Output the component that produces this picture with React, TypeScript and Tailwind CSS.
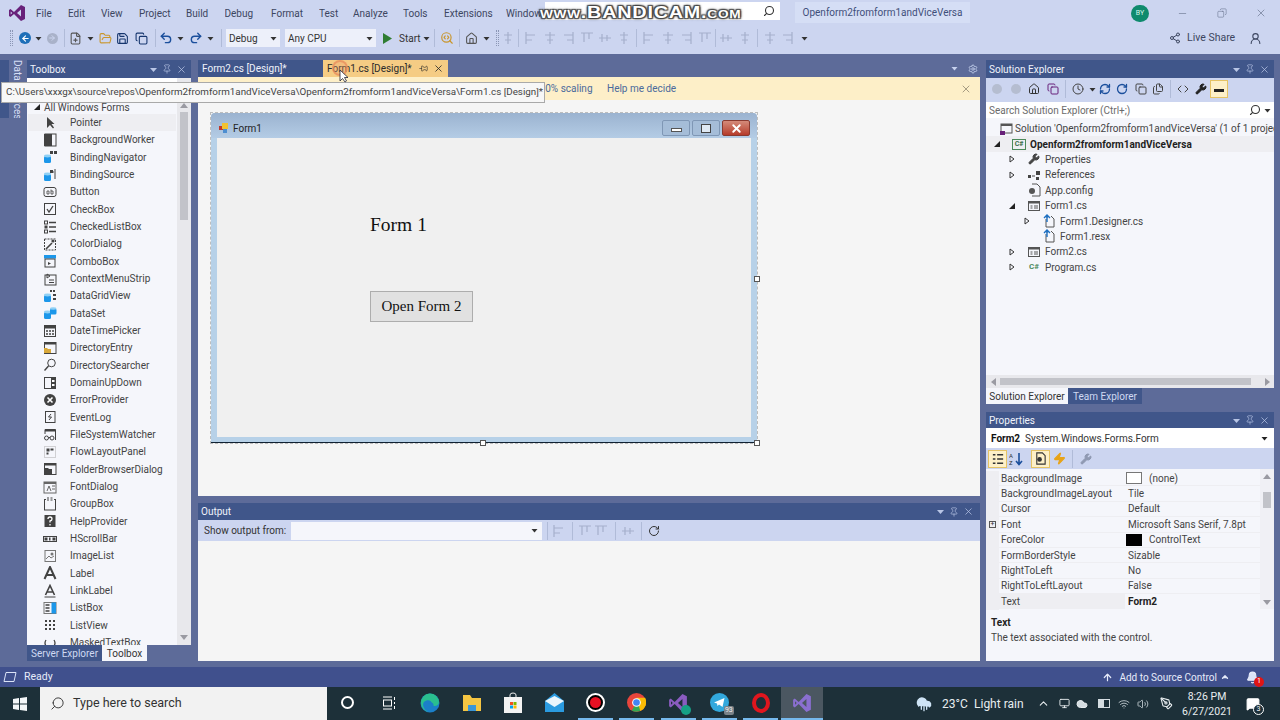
import type { ReactNode } from 'react'
import {
  ChevronUp, Home, RefreshCw, RotateCw, Clock, Copy, Files, Code, Wrench, Search, X, Pin, Settings,
  Undo2, Redo2, Save, FolderOpen, FilePlus, ArrowUp, Bell, Zap, Volume2, Wifi, Cloud, CloudRain, Monitor, PenTool,
  MessageSquare, Share2, UserRound, ArrowLeft, ArrowRight, SearchCode, Minus,
} from 'lucide-react'

function Gl({ children, s = 14 }: { children: ReactNode; s?: number }) {
  return <svg width={s} height={s} viewBox="0 0 14 14" className="shrink-0">{children}</svg>
}

const ink = '#424242'
const cyl = (
  <g>
    <rect x="1" y="6" width="7" height="7" rx="1.5" fill="#1c97ea" />
    <ellipse cx="4.5" cy="6" rx="3.5" ry="1.4" fill="#8fd0f5" />
  </g>
)

const toolIcons: Record<string, ReactNode> = {
  Pointer: <path d="M4 1 L4 12 L7 9 L10 12.5 L11 11.5 L8.5 8 L11.5 8 Z" fill={ink} />,
  BackgroundWorker: <g><rect x="2" y="1" width="11" height="12" fill="none" stroke={ink} /><rect x="1" y="1" width="8" height="7" fill={ink} /><rect x="1" y="6" width="8" height="7" fill={ink} /></g>,
  BindingNavigator: <g>{cyl}<rect x="7" y="1" width="3" height="3" fill={ink} /><rect x="11" y="1" width="3" height="3" fill={ink} /></g>,
  BindingSource: <g>{cyl}<path d="M8 4 h3 M12 1 v10" stroke={ink} fill="none" /><rect x="7" y="2" width="3" height="3" fill={ink} /></g>,
  Button: <g><rect x="1" y="2.5" width="12" height="9" rx="2" fill="none" stroke={ink} /><path d="M4 6 h2 v3 h-2 z M8 4.5 v4.5 h2 v-3 h-2" fill="none" stroke={ink} strokeWidth=".8" /></g>,
  CheckBox: <g><rect x="1.5" y="1.5" width="11" height="11" fill="none" stroke={ink} /><path d="M4 7 L6 10 L10 4" fill="none" stroke={ink} strokeWidth="1.3" /></g>,
  CheckedListBox: <g><rect x="1.5" y="1" width="3" height="3" fill="none" stroke={ink} /><rect x="1.5" y="5.5" width="3" height="3" fill={ink} /><rect x="1.5" y="10" width="3" height="3" fill="none" stroke={ink} /><path d="M6 2.5 h7 M6 7 h7 M6 11.5 h7" stroke={ink} strokeWidth="1.3" /></g>,
  ColorDialog: <g><rect x="1.5" y="2" width="11" height="11" fill="none" stroke={ink} strokeDasharray="2 1" /><path d="M3 12 L9 6" stroke={ink} strokeWidth="1.6" /><circle cx="10" cy="4" r="1.6" fill={ink} /></g>,
  ComboBox: <g><rect x="1" y="1" width="12" height="3.5" fill="#1c97ea" /><rect x="2" y="5" width="10" height="8" fill="none" stroke={ink} /><path d="M5 8 l3 1.5 l-3 1.5" fill={ink} /></g>,
  ContextMenuStrip: <g><rect x="2" y="3" width="11" height="10" fill="none" stroke={ink} /><path d="M4 2 v4 l3 -2 z M6 8 h5 M6 10.5 h5" stroke={ink} fill="none" /></g>,
  DataGridView: <g>{cyl}<path d="M7 1 h2 v2 h-2 z M10 1 h2 v2 h-2 z M10 5 h3 v2 h-3 z M10 9 h3 v2 h-3 z" fill={ink} /></g>,
  DataSet: <g>{cyl}<rect x="7" y="2.5" width="6.5" height="6" rx="1.5" fill="#1c97ea" /><ellipse cx="10.2" cy="2.5" rx="3.2" ry="1.2" fill="#8fd0f5" /></g>,
  DateTimePicker: <g><rect x="1.5" y="1.5" width="11" height="11" fill="none" stroke={ink} /><rect x="1.5" y="1.5" width="11" height="3" fill={ink} /><path d="M3 7 h2 M6 7 h2 M9 7 h2 M3 10 h2 M6 10 h2 M9 10 h2" stroke={ink} strokeWidth="1.4" /></g>,
  DirectoryEntry: <g><rect x="1.5" y="1.5" width="11.5" height="11" fill="none" stroke={ink} /><rect x="1.5" y="1.5" width="11.5" height="2" fill={ink} /><path d="M1 7 h3 l1 1 h3 v4 h-7 z" fill="#d8a83a" /></g>,
  DirectorySearcher: <g><circle cx="8.5" cy="5" r="3.8" fill="none" stroke={ink} /><path d="M5.5 8 L1.5 12.5" stroke={ink} strokeWidth="1.4" /></g>,
  DomainUpDown: <g><rect x="1.5" y="1.5" width="11" height="11" fill="none" stroke={ink} /><rect x="8" y="1.5" width="4.5" height="11" fill={ink} /><rect x="9" y="4" width="2.5" height="2" fill="#fff" /><rect x="9" y="8" width="2.5" height="2" fill="#fff" /></g>,
  ErrorProvider: <g><circle cx="7" cy="7" r="6" fill={ink} /><path d="M4.5 4.5 L9.5 9.5 M9.5 4.5 L4.5 9.5" stroke="#fff" strokeWidth="1.6" /></g>,
  EventLog: <g><rect x="2.5" y="1.5" width="9.5" height="11" fill="none" stroke={ink} /><path d="M8 4 L5.5 7 h3 L6 10" fill="none" stroke={ink} /></g>,
  FileSystemWatcher: <g><path d="M2 6 V1.5 H12.5 V12" fill="none" stroke={ink} /><rect x="2" y="1.5" width="10.5" height="2" fill={ink} /><circle cx="3.5" cy="10" r="2" fill="none" stroke={ink} /><circle cx="9" cy="10" r="2" fill="none" stroke={ink} /><path d="M5.5 9.5 h1.5" stroke={ink} /></g>,
  FlowLayoutPanel: <g><rect x="1.5" y="1.5" width="11" height="11" fill="none" stroke="#aaa" strokeDasharray="1 1" /><rect x="3.5" y="3.5" width="3" height="3" fill={ink} /><rect x="7.5" y="3.5" width="3" height="2" fill={ink} /><rect x="3.5" y="7.5" width="2" height="2" fill={ink} /></g>,
  FolderBrowserDialog: <g><rect x="1.5" y="1.5" width="11.5" height="11" fill="none" stroke={ink} /><rect x="1.5" y="1.5" width="11.5" height="2" fill={ink} /><path d="M1 6 h4 l1 1 h3 v6 h-8 z" fill={ink} /></g>,
  FontDialog: <g><rect x="1" y="2" width="12" height="11" fill="none" stroke="#666" /><rect x="1" y="2" width="12" height="2" fill="#666" /><path d="M4 11 L6 6 L8 11 M9 6 h3 M9 9 h3" fill="none" stroke="#666" /></g>,
  GroupBox: <g><rect x="1.5" y="2.5" width="11" height="10.5" fill="none" stroke={ink} /><rect x="3" y="0.5" width="8" height="3.5" fill="#f5f6fb" /><path d="M4 1 h2 M7.5 1 h2 M4 3 h2 M7.5 3 h2" stroke={ink} /></g>,
  HelpProvider: <g><rect x="1.5" y="1" width="11" height="12" fill={ink} /><path d="M5 5 Q5 3 7 3 Q9 3 9 5 Q9 6.5 7 7 V8.5 M7 10 V11.5" fill="none" stroke="#fff" strokeWidth="1.3" /></g>,
  HScrollBar: <g><rect x="0.5" y="4.5" width="13" height="5" fill="none" stroke={ink} /><rect x="1.5" y="5.5" width="3" height="3" fill={ink} /><rect x="6" y="5.5" width="1.5" height="3" fill={ink} /><rect x="9.5" y="5.5" width="3" height="3" fill={ink} /></g>,
  ImageList: <g><rect x="2" y="1.5" width="10.5" height="11" fill="none" stroke="#777" /><circle cx="9" cy="5" r="1.5" fill="#777" /><path d="M3 10 L6 7 L8 9 L11 7" fill="none" stroke="#777" /></g>,
  Label: <path d="M1.5 13 L7 1 L12.5 13 M4 9 h6" fill="none" stroke={ink} strokeWidth="2" />,
  LinkLabel: <g><path d="M2.5 11 L7 1.5 L11.5 11 M4.5 8 h5" fill="none" stroke={ink} strokeWidth="1.6" /><path d="M1.5 13 h11" stroke={ink} /></g>,
  ListBox: <g><rect x="1" y="1.5" width="12" height="11" fill="none" stroke="#777" /><rect x="8.5" y="1.5" width="4.5" height="11" fill="#1c97ea" /><path d="M2.5 4 h4 M2.5 7 h4 M2.5 10 h4" stroke={ink} strokeWidth="1.3" /></g>,
  ListView: <g>{[2, 6, 10].map((x) => [2, 6, 10].map((y) => <rect key={`${x}${y}`} x={x} y={y} width="2" height="2" fill={ink} />))}</g>,
  MaskedTextBox: <path d="M3 4 Q1 7 3 10 M11 4 Q13 7 11 10 M7 9 v1" fill="none" stroke={ink} strokeWidth="1.3" />,
}

const toolNames = Object.keys(toolIcons)

const menus: [string, string][] = [
  ['File', 'w-[32px]'], ['Edit', 'w-[33px]'], ['View', 'w-[38px]'], ['Project', 'w-[47px]'], ['Build', 'w-[38.5px]'], ['Debug', 'w-[46.5px]'],
  ['Format', 'w-[48px]'], ['Test', 'w-[34px]'], ['Analyze', 'w-[50px]'], ['Tools', 'w-[41px]'], ['Extensions', 'w-[62px]'], ['Window', 'w-[39px]'],
]

function Cell({ w, children }: { w: string; children?: ReactNode }) {
  return <div className={`flex shrink-0 items-center justify-center ${w}`}>{children}</div>
}

function PanelButtons({ tone = 'text-[#b9c6e6]' }: { tone?: string }) {
  return (
    <div className={`flex items-center gap-[4px] ${tone}`}>
      <svg width="9" height="9" viewBox="0 0 9 9"><path d="M1 3 h7 L4.5 7 z" fill="currentColor" /></svg>
      <Pin size={10} strokeWidth={1.6} />
      <X size={11} strokeWidth={1.6} />
    </div>
  )
}

function Caret({ className = 'text-[#333]' }: { className?: string }) {
  return (
    <svg width="7" height="5" viewBox="0 0 7 5" className={`shrink-0 ${className}`}><path d="M0.5 1 h6 L3.5 4.5 z" fill="currentColor" /></svg>
  )
}

function Grip() {
  return <div className="h-[16px] w-[3px] shrink-0 border-x border-dotted border-[#8b96b5]" />
}

function Sep({ c = 'bg-[#b0bbd8]' }: { c?: string }) {
  return <div className={`h-[18px] w-px shrink-0 ${c}`} />
}

function Combo({ label, w }: { label: string; w: string }) {
  return (
    <div className={`flex h-[18px] shrink-0 items-center justify-between bg-[#edf0fa] px-[3px] text-[#333] ${w}`}>
      <span>{label}</span>
      <Caret />
    </div>
  )
}

function DisabledGlyph({ kind }: { kind: number }) {
  const d = [
    'M7 1 v12 M3 4 h8 M4 9 h6',
    'M2 1 v12 M2 4 h9 M2 9 h6',
    'M7 1 v12 M2 4 h10 M4 9 h6',
    'M12 1 v12 M3 4 h9 M6 9 h6',
    'M1 2 h12 M4 2 v9 M9 2 v6',
    'M1 7 h12 M4 3 v8 M9 4 v6',
  ][kind % 6]
  return (
    <svg width="14" height="14" viewBox="0 0 14 14" className="shrink-0"><path d={d} fill="none" stroke="#a5b0cc" strokeWidth="1.2" /></svg>
  )
}

function VsLogo({ s = 18, c = '#68217a' }: { s?: number; c?: string }) {
  return (
    <svg width={s} height={s} viewBox="0 0 18 18" className="shrink-0">
      <path d="M13 1 L17 3 V15 L13 17 L6 10 L2.5 13 L1 12 V6 L2.5 5 L6 8 Z M13 5.5 L9 9 L13 12.5 Z M2.7 7.5 V10.5 L4.3 9 Z" fill={c} fillRule="evenodd" />
    </svg>
  )
}

function TreeRow({ depth, arrow, icon, children, selected }: { depth: number; arrow?: 'open' | 'closed'; icon: ReactNode; children: ReactNode; selected?: boolean }) {
  return (
    <div className={`flex h-[15.4px] items-center whitespace-nowrap ${selected ? 'bg-[#eeeef2] font-bold text-[#1e1e1e]' : ''}`}>
      <div className="flex w-[22px] shrink-0 items-center justify-end" style={{ paddingRight: 8, marginLeft: depth }}>
        {arrow === 'open' && <svg width="6" height="6" viewBox="0 0 6 6"><path d="M6 0 V6 H0 Z" fill="#222" /></svg>}
        {arrow === 'closed' && <svg width="6" height="8" viewBox="0 0 6 8"><path d="M1 1 L5 4 L1 7 Z" fill="none" stroke="#333" /></svg>}
      </div>
      <div className="ml-[4px] mr-[4px] flex w-[14px] shrink-0 justify-center">{icon}</div>
      <span>{children}</span>
    </div>
  )
}

const formIcon = <Gl><rect x="1.5" y="2.5" width="11" height="9" fill="none" stroke="#555" /><rect x="1.5" y="2.5" width="11" height="2" fill="#555" /><path d="M3.5 7 h2 M3.5 9 h2 M7 7 h4 M7 9 h4" stroke="#555" /></Gl>
const fileIcon = <Gl><path d="M4 3 H6 M9 2 L12 5 V13 H4 V5" fill="none" stroke="#555" /><path d="M2 4 L5 1 L8 4 M5 1 V8" fill="none" stroke="#1b6fc2" strokeWidth="1.4" /></Gl>

const propRows: [string, ReactNode][] = [
  ['BackgroundImage', <span className="flex items-center gap-[7px]"><span className="-ml-[2px] h-[12px] w-[16px] border border-[#777] bg-white" />(none)</span>],
  ['BackgroundImageLayout', 'Tile'],
  ['Cursor', 'Default'],
  ['Font', 'Microsoft Sans Serif, 7.8pt'],
  ['ForeColor', <span className="flex items-center gap-[7px]"><span className="-ml-[2px] h-[12px] w-[16px] bg-black" />ControlText</span>],
  ['FormBorderStyle', 'Sizable'],
  ['RightToLeft', 'No'],
  ['RightToLeftLayout', 'False'],
  ['Text', <b className="text-[#222]">Form2</b>],
]

function TaskCell({ children, active, running }: { children: ReactNode; active?: boolean; running?: boolean }) {
  return (
    <div className="flex h-full w-[41.3px] shrink-0 justify-center">
      <div className={`flex h-full items-center justify-center border-b-2 ${active ? 'w-full border-[#76b9ed] bg-[#4b5761]' : running ? 'w-[35px] border-[#76b9ed]' : 'w-full border-transparent'}`}>
        {children}
      </div>
    </div>
  )
}

export default function App() {
  return (
    <div className="relative flex h-[720px] w-[1280px] flex-col overflow-hidden bg-[#5d6b99] font-['Roboto','Noto_Sans',sans-serif] text-[10px] text-[#444]">
      {/* title bar */}
      <div className="flex h-[26px] shrink-0 items-center bg-[#ccd5f0] text-[#3c4660]">
        <div className="ml-[8px] mr-[10px]"><VsLogo /></div>
        <div className="flex shrink-0 pt-[1px]">
          {menus.map(([m, w]) => (
            <span key={m} className={`overflow-hidden whitespace-nowrap ${w}`}>{m}</span>
          ))}
        </div>
        <div className="-mt-[5px] flex h-[18px] w-[235px] shrink-0 items-center justify-end bg-white pr-[5px]"><Search size={12} strokeWidth={2.2} className="scale-x-[-1] text-[#333]" /></div>
        <div className="-mt-[1px] ml-[15px] flex h-[21px] w-[175px] shrink-0 items-center justify-center bg-[#d5def5] text-[#3f4f7a]">Openform2fromform1andViceVersa</div>
        <div className="ml-[161px] flex h-[17px] w-[18px] shrink-0 items-center justify-center rounded-full bg-[#0e8a6d] text-[7px] text-[#d7f5ea]">BY</div>
        <div className="ml-[28px] flex w-[90px] shrink-0 items-center justify-between text-[#5a6680]">
          <Minus size={11} strokeWidth={1.2} />
          <Copy size={10} strokeWidth={1.2} className="scale-x-[-1]" />
          <X size={12} strokeWidth={1.2} />
        </div>
      </div>

      {/* toolbar */}
      <div className="flex h-[28px] shrink-0 items-center bg-[#ccd5f0] pb-[4px] pl-[8px] text-[#333]">
        <Cell w="w-[6px]"><Grip /></Cell>
        <Cell w="ml-[4px] w-[14px]"><div className="flex h-[12px] w-[12px] items-center justify-center rounded-full bg-[#1e6fb8]"><ArrowLeft size={9} strokeWidth={3} className="text-white" /></div></Cell>
        <Cell w="w-[12px]"><Caret /></Cell>
        <Cell w="w-[16px]"><div className="flex h-[11px] w-[11px] items-center justify-center rounded-full bg-[#a9b2c9]"><ArrowRight size={8} strokeWidth={3} className="text-[#ccd5f0]" /></div></Cell>
        <Cell w="w-[8px]"><Sep /></Cell>
        <Cell w="w-[15px]"><FilePlus size={13} className="text-[#555]" /></Cell>
        <Cell w="w-[14px]"><Caret /></Cell>
        <Cell w="w-[16px]"><FolderOpen size={13} className="text-[#c9962c]" /></Cell>
        <Cell w="w-[19px]"><Save size={13} className="text-[#16366e]" /></Cell>
        <Cell w="w-[19px]"><Copy size={13} className="text-[#16366e]" /></Cell>
        <Cell w="w-[8px]"><Sep /></Cell>
        <Cell w="w-[14px]"><Undo2 size={14} strokeWidth={2.4} className="text-[#1b4f9c]" /></Cell>
        <Cell w="w-[15px]"><Caret /></Cell>
        <Cell w="w-[15px]"><Redo2 size={14} strokeWidth={2.4} className="text-[#1b4f9c]" /></Cell>
        <Cell w="w-[14px]"><Caret /></Cell>
        <Cell w="w-[9px]"><Sep /></Cell>
        <Combo label="Debug" w="w-[54px]" />
        <Combo label="Any CPU" w="ml-[5px] w-[91px]" />
        <Cell w="w-[23px]"><svg width="9" height="11" viewBox="0 0 9 11"><path d="M0 0 L9 5.5 L0 11 Z" fill="#2f7d32" /></svg></Cell>
        <span className="w-[22px] shrink-0">Start</span>
        <Cell w="w-[10px]"><Caret /></Cell>
        <Cell w="w-[7px]"><Sep /></Cell>
        <Cell w="w-[18px]"><SearchCode size={14} className="text-[#c9962c]" /></Cell>
        <Cell w="w-[6px]"><Sep /></Cell>
        <Cell w="w-[18px]"><Home size={13} className="text-[#555]" /></Cell>
        <Cell w="w-[13px]"><Caret /></Cell>
        <Cell w="w-[8px]"><Grip /></Cell>
        <Cell w="w-[14px]"><DisabledGlyph kind={0} /></Cell>
        <Cell w="w-[7px]"><Sep /></Cell>
        {[1, 2, 3, 4, 5, 0].map((k) => (<Cell key={k} w="w-[18.5px]"><DisabledGlyph kind={k} /></Cell>))}
        <Cell w="w-[7px]"><Sep /></Cell>
        {[1, 2, 3, 4].map((k) => (<Cell key={k} w="w-[18.5px]"><DisabledGlyph kind={k} /></Cell>))}
        <Cell w="w-[2px]"><Sep /></Cell>
        {[5, 0].map((k) => (<Cell key={k} w="w-[19px]"><DisabledGlyph kind={k} /></Cell>))}
        <Cell w="w-[7px]"><Sep /></Cell>
        {[2, 3].map((k) => (<Cell key={k} w="w-[17px]"><DisabledGlyph kind={k} /></Cell>))}
        <Cell w="w-[18px]"><Caret /></Cell>
        <div className="ml-auto flex items-center whitespace-nowrap pr-[18px] text-[#3c4660]">
          <Share2 size={12} />
          <span className="ml-[6px] w-[44px] text-[10.5px]">Live Share</span>
          <UserRound size={13} className="ml-[18px]" />
        </div>
      </div>

      {/* docked panels */}
      <div className="flex min-h-0 flex-1 pb-[6px] pt-[6px]">
        {/* left rail */}
        <div className="flex w-[27px] shrink-0 items-start">
          <div className="h-[58px] w-[9px] bg-[#40568a]" />
          <div className="h-[58px] overflow-hidden whitespace-nowrap pl-[1px] text-[#d5def5] [writing-mode:vertical-rl]">Data Sources</div>
        </div>

        {/* toolbox */}
        <div className="flex w-[164px] shrink-0 flex-col">
          <div className="flex h-[18px] shrink-0 items-center justify-between bg-[#40568a] pl-[3px] pr-[4px] text-[#f0f3fb]">
            <span>Toolbox</span>
            <PanelButtons />
          </div>
          <div className="flex min-h-0 flex-1 bg-[#f5f6fb]">
            <div className="min-w-0 flex-1 overflow-hidden">
              <div className="h-[22px] bg-white" />
              <div className="flex h-[14px] items-center gap-[4px] pl-[7px] text-[#444]">
                <svg width="6" height="6" viewBox="0 0 6 6"><path d="M6 0 V6 H0 Z" fill="#222" /></svg>
                All Windows Forms
              </div>
              {toolNames.map((name) => (
                <div key={name} className={`ml-[1px] mr-[1px] flex h-[17.33px] items-center ${name === 'Pointer' ? 'bg-[#eeeef2]' : ''}`}>
                  <div className="ml-[15px] flex w-[14px] justify-center"><Gl>{toolIcons[name]}</Gl></div>
                  <span className="ml-[13px] whitespace-nowrap">{name}</span>
                </div>
              ))}
            </div>
            <div className="flex w-[14px] shrink-0 flex-col items-center bg-[#e8e8ec] pt-[25px]">
              <svg width="8" height="5" viewBox="0 0 8 5"><path d="M0 5 L4 0 L8 5 Z" fill="#9a9aa2" /></svg>
              <div className="mt-[4px] h-[108px] w-[8px] bg-[#c2c3c9]" />
              <svg width="8" height="5" viewBox="0 0 8 5" className="mb-[5px] mt-auto"><path d="M0 0 L8 0 L4 5 Z" fill="#9a9aa2" /></svg>
            </div>
          </div>
          <div className="flex h-[16px] shrink-0">
            <div className="flex w-[75px] items-center justify-center bg-[#40568a] text-[#cfd9f2]">Server Explorer</div>
            <div className="flex w-[45px] items-center justify-center bg-[#f5f6fb] text-[#333]">Toolbox</div>
          </div>
        </div>

        {/* centre */}
        <div className="ml-[7px] flex w-[782px] shrink-0 flex-col">
          <div className="flex h-[17px] shrink-0 items-stretch whitespace-nowrap text-[#f0f3fb]">
            <div className="flex w-[125px] items-center bg-[#40568a] pl-[4px]">Form2.cs [Design]*</div>
            <div className="flex w-[125px] items-center bg-[#f5cc84] pl-[4px] text-[#2b2b2b]">
              <span className="w-[92px]">Form1.cs [Design]*</span>
              <Pin size={9} strokeWidth={1.6} className="rotate-90" />
              <X size={11} strokeWidth={1.8} className="ml-[5px]" />
            </div>
            <div className="ml-auto flex items-center gap-[10px] pr-[2px] text-[#c7d2ee]">
              <Caret className="text-[#c7d2ee]" />
              <Settings size={10} />
            </div>
          </div>
          <div className="flex h-[23px] shrink-0 items-center bg-[#fdefc8] pl-[336px] pr-[8px] text-[#4a6a9c]">
            <span className="w-[73px]">100% scaling</span>
            <span>Help me decide</span>
            <X size={12} strokeWidth={1.3} className="ml-auto text-[#77705c]" />
          </div>

          {/* designer surface */}
          <div className="h-[396px] shrink-0 bg-[#f5f5f5] pl-[12px] pt-[12px]">
            <div className="relative h-[332px] w-[548px] border border-dashed border-[#bdbdbd]">
              <div className="flex h-[330px] w-[546px] flex-col rounded-t-[4px] border-b border-[#123] bg-[#b7d1e8]">
                <div className="flex h-[25px] shrink-0 items-start rounded-t-[4px] bg-gradient-to-b from-[#9bb3d0] to-[#b4cce5] pl-[7px] pr-[7px] pt-[7px] text-[#222]">
                  <svg width="12" height="12" viewBox="0 0 12 12" className="mt-[2px]"><rect x="1" y="4" width="4" height="4" fill="#c0392b" /><rect x="4" y="1" width="6" height="6" fill="#f2c230" /><rect x="5" y="7" width="4" height="4" fill="#4d8ed0" /></svg>
                  <span className="ml-[3px] mt-[1px]">Form1</span>
                  <div className="ml-auto flex items-stretch gap-[2px]">
                    <div className="flex h-[16px] w-[28px] items-center justify-center rounded-[2px] border border-[#7f97b5] bg-[#a5bdd8]"><div className="mt-[3px] h-[4px] w-[11px] border border-[#555] bg-white" /></div>
                    <div className="flex h-[16px] w-[28px] items-center justify-center rounded-[2px] border border-[#7f97b5] bg-[#a5bdd8]"><div className="h-[9px] w-[10px] border border-[#444] bg-[#dfe9f3]" /></div>
                    <div className="flex h-[16px] w-[28px] items-center justify-center rounded-[2px] border border-[#8a3a30] bg-gradient-to-b from-[#d48a7a] to-[#b53a2a]"><X size={13} strokeWidth={3.5} className="text-white" /></div>
                  </div>
                </div>
                <div className="mx-[6px] mb-[5px] min-h-0 flex-1 bg-[#f0f0f0] pl-[153px] pt-[75px] font-['Liberation_Serif',serif] text-black">
                  <div className="text-[19.5px] leading-[24px] text-[#111]">Form 1</div>
                  <div className="mt-[54px] flex h-[31px] w-[103px] items-center justify-center border border-[#adadad] bg-[#e1e1e1] text-[15px] text-[#111]">Open Form 2</div>
                </div>
              </div>
              <div className="absolute -bottom-[3px] left-[269px] h-[6px] w-[6px] border border-[#555] bg-white" />
              <div className="absolute -bottom-[3px] -right-[3px] h-[6px] w-[6px] border border-[#555] bg-white" />
              <div className="absolute -right-[3px] top-[163px] h-[6px] w-[6px] border border-[#555] bg-white" />
            </div>
          </div>

          <div className="h-[7px] shrink-0" />

          {/* output */}
          <div className="flex h-[17px] shrink-0 items-center justify-between bg-[#40568a] pl-[3px] pr-[6px] text-[#f0f3fb]">
            <span>Output</span>
            <PanelButtons />
          </div>
          <div className="flex h-[21px] shrink-0 items-center bg-[#ccd5f0] text-[#333]">
            <span className="w-[93px] shrink-0 pl-[6px]">Show output from:</span>
            <div className="flex h-[18px] w-[251px] shrink-0 items-center justify-end bg-[#f5f6fb] pr-[4px]"><Caret /></div>
            <Cell w="w-[10px]"><Sep /></Cell>
            <Cell w="w-[14px]"><DisabledGlyph kind={1} /></Cell>
            <Cell w="w-[12px]"><Sep /></Cell>
            <Cell w="w-[14px]"><DisabledGlyph kind={4} /></Cell>
            <Cell w="w-[17px]"><DisabledGlyph kind={4} /></Cell>
            <Cell w="w-[12px]"><Sep /></Cell>
            <Cell w="w-[14px]"><DisabledGlyph kind={5} /></Cell>
            <Cell w="w-[12px]"><Sep /></Cell>
            <Cell w="w-[14px]"><RotateCw size={12} className="text-[#333]" /></Cell>
          </div>
          <div className="min-h-0 flex-1 bg-[#f5f5f5]" />
        </div>

        {/* right column */}
        <div className="ml-[6px] flex w-[288px] shrink-0 flex-col">
          <div className="flex h-[18px] shrink-0 items-center justify-between bg-[#40568a] pl-[3px] pr-[4px] text-[#f0f3fb]">
            <span>Solution Explorer</span>
            <PanelButtons />
          </div>
          <div className="flex h-[24px] shrink-0 items-center bg-[#ccd5f0] pb-[2px] pl-[1px] text-[#444]">
            <Cell w="w-[20px]"><div className="h-[10px] w-[10px] rounded-full bg-[#b5bdd0]" /></Cell>
            <Cell w="w-[18px]"><div className="h-[10px] w-[10px] rounded-full bg-[#b5bdd0]" /></Cell>
            <Cell w="w-[18px]"><Home size={12} className="text-[#333]" /></Cell>
            <Cell w="w-[19px]"><Copy size={12} className="text-[#68217a]" /></Cell>
            <Cell w="w-[6px]"><Sep /></Cell>
            <Cell w="w-[20px]"><Clock size={12} /></Cell>
            <Cell w="w-[8px]"><Caret /></Cell>
            <Cell w="w-[17px]"><RefreshCw size={12} strokeWidth={2.6} className="text-[#1b4f9c]" /></Cell>
            <Cell w="w-[18px]"><RotateCw size={12} strokeWidth={2.6} className="text-[#1b4f9c]" /></Cell>
            <Cell w="w-[19px]"><Copy size={12} /></Cell>
            <Cell w="w-[16px]"><Files size={12} /></Cell>
            <Cell w="w-[8px]"><Sep /></Cell>
            <Cell w="w-[18px]"><Code size={12} /></Cell>
            <Cell w="w-[18px]"><Wrench size={12} className="fill-[#222] text-[#222]" /></Cell>
            <div className="flex h-[18px] w-[18px] shrink-0 items-center justify-center border border-[#e5c365] bg-[#fdf0c8]"><div className="mt-[2px] h-[3px] w-[10px] bg-[#222]" /></div>
          </div>
          <div className="flex h-[16px] shrink-0 items-center justify-between bg-white pl-[3px] pr-[3px] text-[#6b6b6b]">
            <span>Search Solution Explorer (Ctrl+;)</span>
            <span className="flex items-center gap-[3px]"><Search size={12} strokeWidth={2.2} className="scale-x-[-1] text-[#333]" /><Caret /></span>
          </div>
          <div className="h-[257px] shrink-0 overflow-hidden whitespace-nowrap bg-[#f5f6fb] pt-[3px] text-[#444]">
            <div className="flex h-[15.4px] items-center pl-[13px]">
              <Gl><rect x="2" y="2" width="11" height="9" fill="none" stroke="#555" /><rect x="2" y="2" width="11" height="2" fill="#555" /><rect x="1" y="9" width="5" height="4" fill="#68217a" /></Gl>
              <span className="ml-[2px]">Solution 'Openform2fromform1andViceVersa' (1 of 1 project)</span>
            </div>
            <TreeRow depth={0} arrow="open" selected icon={<span className="flex h-[11px] w-[14px] items-center justify-center border border-[#4c8a5b] text-[7px] font-bold text-[#3d6e4a]">C#</span>}>Openform2fromform1andViceVersa</TreeRow>
            <TreeRow depth={15} arrow="closed" icon={<Wrench size={12} className="fill-[#444]" />}>Properties</TreeRow>
            <TreeRow depth={15} arrow="closed" icon={<Gl><rect x="1" y="7" width="3" height="3" fill="#444" /><rect x="9" y="3" width="4" height="4" fill="#444" /><rect x="9" y="9" width="3" height="3" fill="#444" /><path d="M5 8 h3" stroke="#444" /></Gl>}>References</TreeRow>
            <TreeRow depth={15} icon={<Gl><path d="M5 1 H10 L13 4 V13 H5" fill="none" stroke="#555" /><circle cx="5" cy="8" r="3" fill="#555" /></Gl>}>App.config</TreeRow>
            <TreeRow depth={15} arrow="open" icon={formIcon}>Form1.cs</TreeRow>
            <TreeRow depth={30} arrow="closed" icon={fileIcon}>Form1.Designer.cs</TreeRow>
            <TreeRow depth={30} icon={fileIcon}>Form1.resx</TreeRow>
            <TreeRow depth={15} arrow="closed" icon={formIcon}>Form2.cs</TreeRow>
            <TreeRow depth={15} arrow="closed" icon={<span className="text-[8px] font-bold text-[#4c8a5b]">C#</span>}>Program.cs</TreeRow>
          </div>
          <div className="flex h-[13px] shrink-0 items-center bg-[#e8e8ec] pl-[5px] pr-[4px]">
            <svg width="5" height="8" viewBox="0 0 5 8"><path d="M5 0 V8 L0 4 Z" fill="#9a9aa2" /></svg>
            <div className="ml-[4px] h-[7px] w-[251px] bg-[#c2c3c9]" />
            <svg width="5" height="8" viewBox="0 0 5 8" className="ml-auto"><path d="M0 0 V8 L5 4 Z" fill="#9a9aa2" /></svg>
          </div>
          <div className="flex h-[16px] shrink-0">
            <div className="flex w-[82px] items-center justify-center bg-[#f5f6fb] text-[#333]">Solution Explorer</div>
            <div className="flex w-[74px] items-center justify-center bg-[#40568a] text-[#cfd9f2]">Team Explorer</div>
          </div>
          <div className="h-[8px] shrink-0" />

          {/* properties */}
          <div className="flex h-[16px] shrink-0 items-center justify-between bg-[#40568a] pl-[3px] pr-[4px] text-[#f0f3fb]">
            <span>Properties</span>
            <PanelButtons />
          </div>
          <div className="flex h-[20px] shrink-0 items-center bg-white pl-[5px] pr-[6px] text-[#333]">
            <b className="text-[#111]">Form2</b>
            <span className="ml-[5px]">System.Windows.Forms.Form</span>
            <Caret className="ml-auto text-[#222]" />
          </div>
          <div className="flex h-[21px] shrink-0 items-center bg-[#ccd5f0] pl-[2px]">
            <div className="flex h-[18px] w-[19px] shrink-0 items-center justify-center border border-[#e5c365] bg-[#fdf0c8]"><Gl s={12}><path d="M1 2 h3 M6 2 h7 M1 7 h3 M6 7 h7 M1 12 h3 M6 12 h7" stroke="#333" strokeWidth="1.6" /></Gl></div>
            <Cell w="w-[18px]"><Gl><text x="0" y="6" fontSize="6" fill="#333">A</text><text x="0" y="13" fontSize="6" fill="#333">Z</text><path d="M10 1 V12 M7 9 L10 12.5 L13 9" fill="none" stroke="#1b4f9c" strokeWidth="1.6" /></Gl></Cell>
            <div className="ml-[6px] flex h-[18px] w-[19px] shrink-0 items-center justify-center border border-[#e5c365] bg-[#fdf0c8]"><Gl s={13}><path d="M3 1 H9 L12 4 V13 H3 Z" fill="none" stroke="#333" strokeWidth="1.2" /><circle cx="6" cy="8" r="2.5" fill="#333" /></Gl></div>
            <Cell w="w-[18px]"><Zap size={13} className="fill-[#e8a317] text-[#e8a317]" /></Cell>
            <Cell w="w-[8px]"><Sep /></Cell>
            <Cell w="w-[14px] ml-[3px]"><Wrench size={12} className="fill-[#8f99b2] text-[#8f99b2]" /></Cell>
          </div>
          <div className="flex h-[140px] shrink-0 bg-[#f5f6fb] text-[#444]">
            <div className="min-w-0 flex-1 pt-[2px]">
              {propRows.map(([k, v]) => (
                <div key={k} className="flex h-[15.4px] items-stretch">
                  <div className="relative flex w-[13px] shrink-0 items-center justify-center bg-[#eeeef2]">
                    {k === 'Font' && <div className="flex h-[7px] w-[7px] items-center justify-center border border-[#555] text-[7px] leading-none text-[#333]">+</div>}
                  </div>
                  <div className={`flex w-[126px] shrink-0 items-center whitespace-nowrap border-b border-[#eeeef2] pl-[2px] ${k === 'Text' ? 'bg-[#eeeef2]' : ''}`}>{k}</div>
                  <div className="flex flex-1 items-center whitespace-nowrap border-b border-[#eeeef2] pl-[3px]">{v}</div>
                </div>
              ))}
            </div>
            <div className="flex w-[14px] shrink-0 flex-col items-center bg-[#f0f0f5] pt-[5px]">
              <svg width="8" height="5" viewBox="0 0 8 5"><path d="M0 5 L4 0 L8 5 Z" fill="#9a9aa2" /></svg>
              <div className="mt-[13px] h-[16px] w-[8px] bg-[#c2c3c9]" />
              <svg width="8" height="5" viewBox="0 0 8 5" className="mb-[4px] mt-auto"><path d="M0 0 L8 0 L4 5 Z" fill="#9a9aa2" /></svg>
            </div>
          </div>
          <div className="min-h-0 flex-1 bg-[#f5f6fb] pl-[5px] pt-[6px] text-[#444]">
            <div className="font-bold text-[#222]">Text</div>
            <div className="-mt-[0px]">The text associated with the control.</div>
          </div>
        </div>
      </div>

      {/* status bar */}
      <div className="flex h-[20px] shrink-0 items-center bg-[#40508d] text-[#e6ebfa]">
        <svg width="14" height="12" viewBox="0 0 14 12" className="ml-[3px]"><path d="M3 1.5 H13 L11 10.5 H1 Z" fill="none" stroke="#dbe3f7" /></svg>
        <span className="ml-[7px] text-[10.5px]">Ready</span>
        <div className="ml-auto flex items-center pr-[21px]">
          <ArrowUp size={11} strokeWidth={2.6} />
          <span className="ml-[6px]">Add to Source Control</span>
          <ChevronUp size={10} strokeWidth={3} className="ml-[3px] fill-current" />
          <div className="relative ml-[16px]">
            <Bell size={13} className="fill-[#dbe3f7]" />
            <span className="absolute -bottom-[3px] -right-[5px] flex h-[10px] w-[10px] items-center justify-center rounded-full bg-[#e01515] text-[7px] text-white">1</span>
          </div>
        </div>
      </div>

      {/* taskbar */}
      <div className="flex h-[33px] shrink-0 items-center bg-[#1d3039] text-white">
        <div className="flex w-[40px] shrink-0 justify-center">
          <svg width="16" height="16" viewBox="0 0 16 16"><path d="M1 3 L7 2 V7.5 H1 Z M8 1.9 L15 1 V7.5 H8 Z M1 8.5 H7 V14 L1 13 Z M8 8.5 H15 V15 L8 14.1 Z" fill="#f3f6f8" /></svg>
        </div>
        <div className="flex h-full w-[287px] shrink-0 items-center bg-[#f2f2f2] pl-[10px] text-[12.5px] text-[#333]">
          <Search size={15} strokeWidth={1.5} className="scale-x-[-1]" />
          <span className="ml-[8px]">Type here to search</span>
        </div>
        <TaskCell><div className="h-[13px] w-[13px] rounded-full border-2 border-white" /></TaskCell>
        <TaskCell><svg width="14" height="14" viewBox="0 0 14 14"><path d="M1 1 h9 M1 13 h9" stroke="#fff" /><rect x="1.5" y="4" width="8" height="6" fill="none" stroke="#fff" /><path d="M12.5 1 v3 M12.5 6 v2 M12.5 10 v3" stroke="#fff" /></svg></TaskCell>
        <TaskCell><svg width="20" height="20" viewBox="0 0 20 20"><circle cx="10" cy="10" r="9.5" fill="#1b7fc9" /><path d="M1 10 A9 9 0 0 1 19 9 C19 14 12 14 12 11 C12 7 7 6 4 9 C2 11 3 17 9 19 A9 9 0 0 1 1 10Z" fill="#2abf8f" /><circle cx="11" cy="12" r="2.5" fill="#1b7fc9" /></svg></TaskCell>
        <TaskCell><svg width="20" height="18" viewBox="0 0 20 18"><path d="M1 1 H8 L10 4 H19 V17 H1 Z" fill="#f4c542" /><rect x="6" y="11" width="8" height="6" fill="#3a96d8" /></svg></TaskCell>
        <TaskCell><svg width="20" height="21" viewBox="0 0 20 21"><path d="M7 5 V3 Q7 1 10 1 Q13 1 13 3 V5" fill="none" stroke="#eee" /><rect x="1" y="5" width="18" height="16" fill="#f3f3f3" /><rect x="7" y="10" width="3" height="3" fill="#f25022" /><rect x="10.5" y="10" width="3" height="3" fill="#7fba00" /><rect x="7" y="13.5" width="3" height="3" fill="#00a4ef" /><rect x="10.5" y="13.5" width="3" height="3" fill="#ffb900" /></svg></TaskCell>
        <TaskCell><svg width="21" height="21" viewBox="0 0 21 21"><path d="M1 9 L10.5 1 L20 9 V20 H1 Z" fill="#2b9be0" /><path d="M1 9 L10.5 15 L20 9 L10.5 4Z" fill="#ffffff" opacity=".9" /></svg></TaskCell>
        <TaskCell running><div className="flex h-[19px] w-[19px] items-center justify-center rounded-full border-2 border-white bg-black"><div className="h-[11px] w-[11px] rounded-full bg-[#e81123]" /></div></TaskCell>
        <TaskCell running><svg width="19" height="19" viewBox="0 0 20 20"><circle cx="10" cy="10" r="10" fill="#e8453c" /><path d="M10 10 L19 14 A10 10 0 0 1 5 18.5Z" fill="#34a853" /><path d="M10 5 H19 A10 10 0 0 1 14 19 Z" fill="#fbbc05" /><circle cx="10" cy="10" r="4.6" fill="#fff" /><circle cx="10" cy="10" r="3.5" fill="#4285f4" /></svg></TaskCell>
        <TaskCell running><div className="relative"><VsLogo s={20} c="#8a5cc0" /><span className="absolute -bottom-[2px] -right-[3px] h-[10px] w-[10px] rounded-full bg-[#16a085]" /></div></TaskCell>
        <TaskCell running><div className="relative"><svg width="19" height="19" viewBox="0 0 19 19"><circle cx="9.5" cy="9.5" r="9.5" fill="#32a8dd" /><path d="M4 9.5 L14.5 5 L12.5 14 L9 11.5 L7.5 13 L7 10.5 Z" fill="#fff" /></svg><span className="absolute -bottom-[3px] -right-[5px] rounded-[2px] bg-[#7a8288] px-[1px] text-[7px] leading-[9px] text-[#eee]">93</span></div></TaskCell>
        <TaskCell running><div className="flex h-[20px] w-[18px] items-center justify-center rounded-[50%] border-[4px] border-[#e0161e]"><div className="h-[10px] w-[5px] rounded-[50%] bg-[#1d3039]" /></div></TaskCell>
        <TaskCell active><VsLogo s={20} c="#8a6fd0" /></TaskCell>

        <div className="ml-auto flex h-full items-center whitespace-nowrap pr-[11px] text-[#e8edf0]">
          <Cell w="w-[18px]"><CloudRain size={16} className="fill-[#cfe4f6] text-[#cfe4f6]" /></Cell>
          <span className="ml-[9px] w-[25px] text-[12px]">23°C</span>
          <span className="ml-[7px] w-[49px] text-[12px]">Light rain</span>
          <Cell w="ml-[10px] w-[20px]"><ChevronUp size={13} /></Cell>
          <Cell w="w-[22px]"><Monitor size={11} /></Cell>
          <Cell w="w-[14px]"><Cloud size={12} className="fill-[#d5dde2]" /></Cell>
          <Cell w="w-[29px]"><div className="h-[9px] w-[12px] border border-[#d5dde2] [background:linear-gradient(90deg,#d5dde2_50%,transparent_50%)]" /></Cell>
          <Cell w="w-[12px]"><Wifi size={12} className="text-[#aeb9bf]" /></Cell>
          <Cell w="w-[26px]"><Volume2 size={12} className="text-[#aeb9bf]" /></Cell>
          <Cell w="w-[21px]"><PenTool size={13} /></Cell>
          <div className="flex w-[60px] shrink-0 flex-col items-center text-[10.5px] leading-[15px]">
            <span>8:26 PM</span>
            <span>6/27/2021</span>
          </div>
          <Cell w="w-[32px]">
            <div className="relative">
              <MessageSquare size={14} className="fill-white text-white" />
              <span className="absolute -bottom-[4px] -right-[4px] flex h-[11px] w-[11px] items-center justify-center rounded-full border border-white bg-[#1d3039] text-[7px] text-white">3</span>
            </div>
          </Cell>
        </div>
      </div>

      {/* path tooltip */}
      <div className="absolute left-[1px] top-[82px] flex h-[21px] w-[544px] items-center whitespace-nowrap border border-[#a9a9a9] bg-[#f7f7f7] pl-[4px] text-[9.8px] text-[#444]">
        C:\Users\xxxgx\source\repos\Openform2fromform1andViceVersa\Openform2fromform1andViceVersa\Form1.cs [Design]*
      </div>

      {/* recorder watermark */}
      <div className="absolute left-[540px] top-[3px] origin-left scale-x-[1.24] font-['Liberation_Sans',sans-serif] text-[16px] font-bold leading-[20px] tracking-[0.6px] text-white [font-variant:small-caps] [text-shadow:-1px_-1px_1px_#444,1px_-1px_1px_#444,-1px_1px_1px_#444,1px_1px_1px_#444,0_0_3px_#222]">
        www.BANDICAM.com
      </div>

      {/* mouse cursor over the tab */}
      <div className="absolute left-[332px] top-[60px] h-[16px] w-[16px] rounded-full border-2 border-[#e88a5a]/70 bg-[#f0a070]/30" />
      <svg width="10" height="14" viewBox="0 0 10 14" className="absolute left-[339px] top-[69px]"><path d="M1 1 V12 L3.5 9.5 L6 13 L7.5 12 L5.5 8.5 L9 8.5 Z" fill="#fff" stroke="#223" strokeWidth=".8" /></svg>
    </div>
  )
}
